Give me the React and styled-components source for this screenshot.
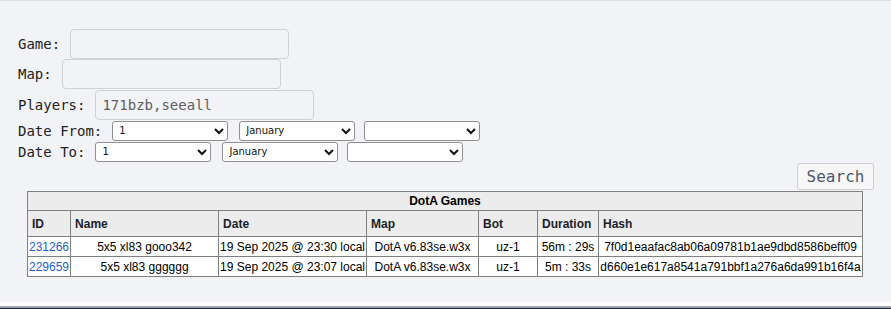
import React from 'react';
import styled, { createGlobalStyle } from 'styled-components';

const GlobalStyle = createGlobalStyle`
  html, body {
    margin: 0;
    padding: 0;
    background: #1f2937;
  }
  * { box-sizing: border-box; }
`

const Page = styled.div`
  background: #f2f3f7;
  border-top: 1px solid #dfe1e6;
  height: 302px;
  padding: 27px 18px 0;
  font-family: "DejaVu Sans Mono", monospace;
  font-size: 14px;
  color: #222;
`

const Footer = styled.div`
  height: 4px;
  background: #ffffff;
  border-bottom: 2px solid #9ca3af;
  box-sizing: content-box;
`

const Row = styled.div`
  display: flex;
  align-items: center;
  gap: ${p => p.$gap ?? 10}px;
  height: ${p => p.$h}px;
`

const Label = styled.span`
  white-space: pre;
`

const TextInput = styled.input`
  width: 219px;
  height: 30px;
  border: 1px solid #cfd1d6;
  border-radius: 4px;
  background: transparent;
  outline: none;
  padding: 0 6px;
  font-family: "DejaVu Sans Mono", monospace;
  font-size: 14px;
  color: #5f5f5f;
`

const Select = styled.select`
  width: 116px;
  height: 20px;
  margin-left: ${p => p.$ml || 0}px;
  border: 1px solid #8f8f8f;
  border-radius: 3px;
  background: #fff;
  font-family: "DejaVu Sans", sans-serif;
  font-size: 10px;
  color: #111;
  padding: 0 2px;
`

const Actions = styled.div`
  display: flex;
  justify-content: flex-end;
  margin: 1px 0 1px;
`

const SearchBtn = styled.button`
  height: 27px;
  width: 77px;
  margin-right: -1px;
  border: 1px solid #ccced3;
  border-radius: 3px;
  background: #f7f7f8;
  font-family: "DejaVu Sans Mono", monospace;
  font-size: 16px;
  color: #4e5866;
  padding: 0;
`

const Table = styled.table`
  width: 836px;
  margin: 0 auto 0 9px;
  border-collapse: collapse;
  font-family: "Liberation Sans", Arial, sans-serif;
  font-size: 12px;
  color: #000;
  border: 1px solid #808080;
`

const Caption = styled.th`
  background: #ececec;
  border: 1px solid #808080;
  height: 19px;
  font-weight: bold;
  text-align: center;
  padding: 0;
`

const HeadCell = styled.th`
  background: #ececec;
  border: 1px solid #808080;
  height: 26px;
  text-align: left;
  font-weight: bold;
  padding: 0 4px;
  color: #1b1f2a;
`

const Cell = styled.td`
  background: #fff;
  border: 1px solid #808080;
  height: 20px;
  padding: 0 1px;
  text-align: ${p => p.$align || 'center'};
  white-space: nowrap;
`

const GameLink = styled.a`
  color: #1a62c8;
  text-decoration: none;
`

const days = Array.from({ length: 31 }, (_, i) => i + 1)
const months = ['January', 'February', 'March', 'April', 'May', 'June', 'July', 'August', 'September', 'October', 'November', 'December']

const games = [
  { id: '231266', name: '5x5 xl83 gooo342', date: '19 Sep 2025 @ 23:30 local', map: 'DotA v6.83se.w3x', bot: 'uz-1', duration: '56m : 29s', hash: '7f0d1eaafac8ab06a09781b1ae9dbd8586beff09' },
  { id: '229659', name: '5x5 xl83 gggggg', date: '19 Sep 2025 @ 23:07 local', map: 'DotA v6.83se.w3x', bot: 'uz-1', duration: '5m : 33s', hash: 'd660e1e617a8541a791bbf1a276a6da991b16f4a' },
]

const DateRow = ({ label }) => (
  <Row $h={21}>
    <Label>{label}</Label>
    <Row $gap={0} $h={21}>
      <Select defaultValue="1">
        {days.map(d => <option key={d}>{d}</option>)}
      </Select>
      <Select defaultValue="January" $ml={11}>
        {months.map(m => <option key={m}>{m}</option>)}
      </Select>
      <Select defaultValue="" $ml={9}>
        <option value=""></option>
      </Select>
    </Row>
  </Row>
)

const App = () => {
  return (
    <>
      <GlobalStyle />
      <Page>
        <Row $h={31}>
          <Label>Game:</Label>
          <TextInput />
        </Row>
        <Row $h={30}>
          <Label>Map:</Label>
          <TextInput />
        </Row>
        <Row $h={31}>
          <Label>Players:</Label>
          <TextInput defaultValue="171bzb,seeall" />
        </Row>
        <DateRow label="Date From:" />
        <DateRow label="Date To:" />
        <Actions>
          <SearchBtn>Search</SearchBtn>
        </Actions>
        <Table>
          <thead>
            <tr>
              <Caption colSpan={7}>DotA Games</Caption>
            </tr>
            <tr>
              <HeadCell style={{ width: 42 }}>ID</HeadCell>
              <HeadCell style={{ width: 148 }}>Name</HeadCell>
              <HeadCell style={{ width: 147 }}>Date</HeadCell>
              <HeadCell style={{ width: 112 }}>Map</HeadCell>
              <HeadCell style={{ width: 59 }}>Bot</HeadCell>
              <HeadCell style={{ width: 61 }}>Duration</HeadCell>
              <HeadCell>Hash</HeadCell>
            </tr>
          </thead>
          <tbody>
            {games.map(g => (
              <tr key={g.id}>
                <Cell $align="left"><GameLink href="#">{g.id}</GameLink></Cell>
                <Cell>{g.name}</Cell>
                <Cell $align="left">{g.date}</Cell>
                <Cell>{g.map}</Cell>
                <Cell>{g.bot}</Cell>
                <Cell>{g.duration}</Cell>
                <Cell>{g.hash}</Cell>
              </tr>
            ))}
          </tbody>
        </Table>
      </Page>
      <Footer />
    </>
  );
};

export default App;
